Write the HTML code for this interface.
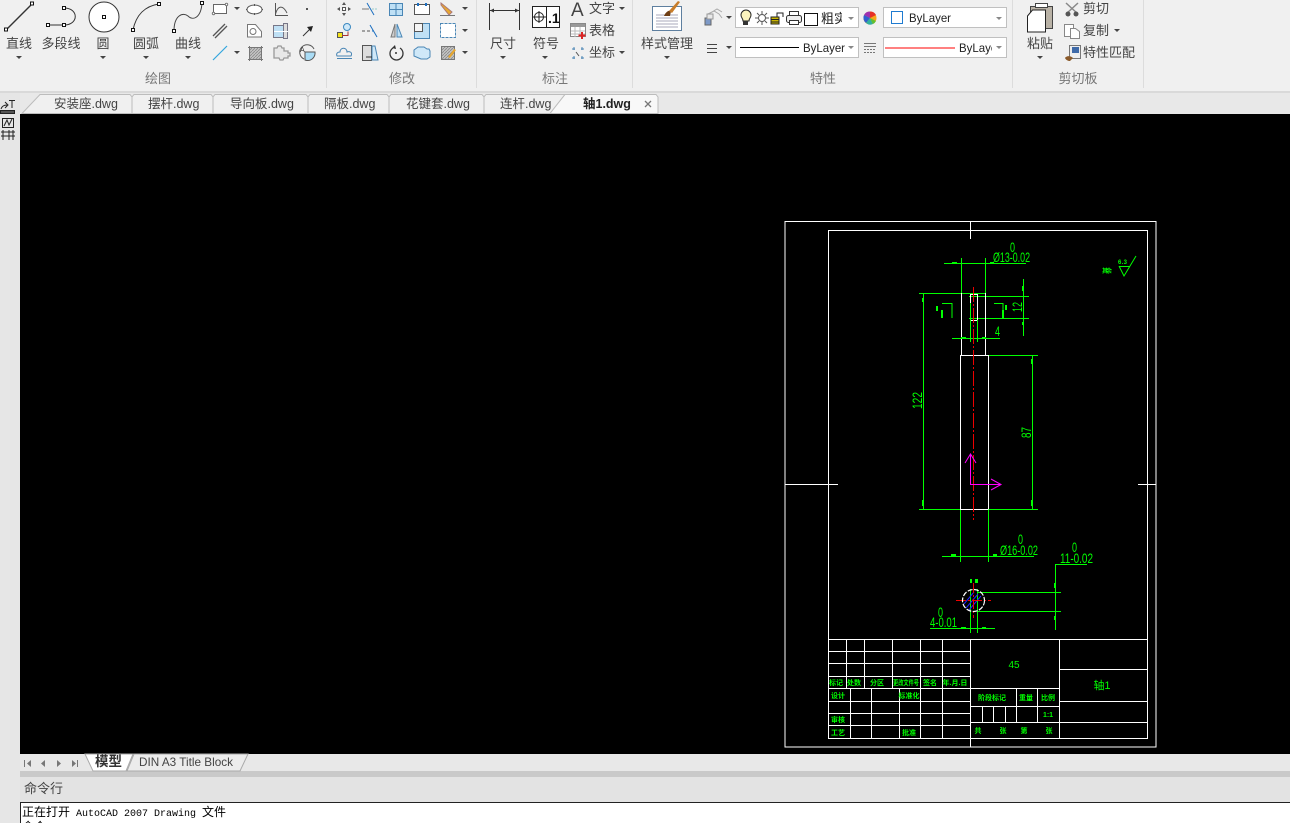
<!DOCTYPE html>
<html lang="zh"><head><meta charset="utf-8"><title>CAD</title>
<style>
html,body{margin:0;padding:0;width:1290px;height:823px;overflow:hidden;background:#f0f0f0}
svg{display:block;position:absolute;left:0;top:0}
text{font-family:"Liberation Sans","Noto Sans CJK SC",sans-serif;white-space:pre}
.l{font-size:13px;fill:#444;text-anchor:middle}
.g{font-size:13px;fill:#777;text-anchor:middle}
.s{font-size:13px;fill:#444}
.t{font-size:12.5px;fill:#444}
.c{font-size:12px;fill:#000}
.w{stroke:#fff;fill:none;stroke-width:1}
.n{stroke:#0f0;fill:none;stroke-width:1}
.d{font-family:"Liberation Sans","Noto Sans CJK SC",sans-serif;fill:#0f0;font-size:14px}
.m{font-size:7px;fill:#0f0;text-anchor:middle;font-weight:bold}
.i{fill:none;stroke:#555;stroke-width:1}
</style></head><body>
<svg width="1290" height="823" viewBox="0 0 1290 823" xmlns="http://www.w3.org/2000/svg">
<defs>
<path id="ar" d="M0 0h6l-3 3z" fill="#444"/>
<pattern id="h" width="3" height="3" patternUnits="userSpaceOnUse"><rect width="3" height="3" fill="#c4c4c4"/><path d="M0 3L3 0" stroke="#888" stroke-width=".8"/></pattern>
</defs>
<!-- backgrounds -->
<rect width="1290" height="91" fill="#f0f0f0"/>
<rect y="91" width="1290" height="2" fill="#d9d9d9"/>
<rect y="93" width="1290" height="21" fill="#e8e8e8"/>
<rect y="93" width="20" height="730" fill="#e6e6e6"/>
<rect x="20" y="114" width="1270" height="640" fill="#000"/>
<rect x="20" y="754" width="1270" height="17" fill="#e8e8e8"/>
<rect x="20" y="771" width="1270" height="6" fill="#c9c9c9"/>
<rect x="20" y="777" width="1270" height="25" fill="#e3e3e3"/>
<rect x="20" y="802" width="1270" height="21" fill="#fff"/>
<path d="M20.5 823V802.5H1290" stroke="#222" fill="none"/>
<!-- separators -->
<g stroke="#dcdcdc"><path d="M326.5 0V88M476.5 0V88M632.5 0V88M1012.5 0V88M1143.5 0V88"/></g>

<!-- draw group -->
<g>
<path d="M6 30L32 4" stroke="#333" stroke-width="1.4"/>
<g fill="#fff" stroke="#111"><rect x="4.5" y="28" width="3" height="3"/><rect x="30.5" y="2" width="3" height="3"/></g>
<path d="M48 25H64M64 8C79 8 79 25 64 25" stroke="#333" fill="none"/>
<g fill="#fff" stroke="#111"><rect x="46.5" y="23.5" width="3" height="3"/><rect x="62.5" y="23.5" width="3" height="3"/><rect x="62.5" y="6.5" width="3" height="3"/></g>
<circle cx="104" cy="17" r="15" fill="#fff" stroke="#333"/>
<rect x="102.5" y="15.5" width="3" height="3" fill="#fff" stroke="#111"/>
<path d="M133 30C136 15 145 6 159 4" stroke="#333" fill="none"/>
<g fill="#fff" stroke="#111"><rect x="131.5" y="28.5" width="3" height="3"/><rect x="157.5" y="2.5" width="3" height="3"/></g>
<path d="M174 31C174 15 183 12 188 16C193 21 201 18 202 3" stroke="#444" fill="none"/>
<g fill="#fff" stroke="#111"><rect x="172.5" y="29.5" width="3" height="3"/><rect x="200.5" y="1.5" width="3" height="3"/></g>
<text class="l" x="19" y="48">直线</text><text class="l" x="61" y="48">多段线</text><text class="l" x="103" y="48">圆</text><text class="l" x="146" y="48">圆弧</text><text class="l" x="188" y="48">曲线</text>
<use href="#ar" x="16" y="56"/><use href="#ar" x="100" y="56"/><use href="#ar" x="143" y="56"/><use href="#ar" x="185" y="56"/>
<text class="g" x="158" y="83">绘图</text>
<!-- small draw icons -->
<rect x="213.5" y="4.5" width="13" height="9" fill="#fff" stroke="#666"/>
<circle cx="226.5" cy="4.5" r="1.2" fill="#fff" stroke="#777"/><circle cx="213.5" cy="13.5" r="1.2" fill="#fff" stroke="#777"/>
<use href="#ar" x="234" y="7"/><use href="#ar" x="234" y="51"/>
<ellipse cx="254.500" cy="9.500" rx="7.500" ry="4.500" fill="#fff" stroke="#555"/><path d="M254.500 4v2M254.500 13v2M247 9.500h-1M262 9.500h1" stroke="#555"/>
<path d="M275.500 3V15.500H288M275.500 14C278 5 283 5 287 13" class="i"/>
<rect x="306" y="8" width="2" height="2" fill="#555"/>
<path d="M213 36L225 24M215 38L227 26" stroke="#555" stroke-width="1.300"/>
<path d="M247.500 24.500h8l6 7v5.500h-14z" fill="#fff" stroke="#777"/><circle cx="253" cy="31.500" r="3" fill="none" stroke="#777"/>
<rect x="273.500" y="25.500" width="10" height="12" fill="#bfe0f5" stroke="#778"/><rect x="283.500" y="23.500" width="4" height="15" fill="#ddd" stroke="#778"/><path d="M274 31.500h14" stroke="#fff"/>
<path d="M303 36L311 28" stroke="#333"/><path d="M307 27l6-1-2 6z" fill="#222"/>
<path d="M213 60L227 46" stroke="#33a6dd" stroke-width="1.200"/>
<rect x="249.500" y="47.500" width="12" height="12" fill="url(#h)" stroke="#777"/><path d="M248 47.500h15M248 59.500h15M249.500 46v15M261.500 46v15" stroke="#777" fill="none"/>
<path d="M274 48h3l1-2h3l1 2h2v3h4v2h2v3h-2v2h-4l-1 2h-3l-1-2h-5z" fill="#e8e8e8" stroke="#999" stroke-width="1.300"/>
<path d="M304 59A7.500 7.500 0 1 1 314 49" fill="none" stroke="#555"/><path d="M305 52h10a7.500 7.500 0 0 1-8 8.500a8 8 0 0 1-2-.5z" fill="#aadcf5" stroke="#555"/>
<text x="300" y="52" font-size="7" fill="#333">A</text>
</g>

<!-- modify group -->
<g>
<g fill="#555"><rect x="342.500" y="7.500" width="3" height="3" fill="#fff" stroke="#555"/><path d="M344 2l2 3h-4zM344 16l2-3h-4zM337 9l3-2v4zM351 9l-3-2v4z"/></g>
<path d="M362 9h7" stroke="#777"/><path d="M372 9h6" stroke="#9cc" stroke-dasharray="2 1"/><path d="M367 3L374 15" stroke="#1d6fc0"/>
<rect x="389.500" y="3.500" width="13" height="12" fill="#bfe0f5" stroke="#4a86b5"/><path d="M396 3v13M390 9.500h13" stroke="#4a86b5"/>
<rect x="414.500" y="4.500" width="15" height="10" fill="#fff" stroke="#555"/><path d="M418 3v3M426 3v3" stroke="#1d6fc0" stroke-width="2"/>
<path d="M441 3l11 9-3 3-8-10z" fill="#e8a830" stroke="#a77"/><path d="M440 15.500h15" stroke="#777"/>
<use href="#ar" x="462" y="7"/><use href="#ar" x="462" y="29"/><use href="#ar" x="462" y="51"/>
<rect x="337.500" y="32.500" width="5" height="5" fill="#f4e21a" stroke="#555"/><circle cx="347" cy="27" r="3.500" fill="#cfe8f8" stroke="#3a88c0"/><path d="M342 35.500h6v-4" stroke="#a33" fill="none"/>
<path d="M362 31h3M367 31h3" stroke="#555"/><path d="M372 31h2" stroke="#1d6fc0"/><path d="M370 25L377 37" stroke="#1d6fc0"/>
<path d="M395 24L391 37h4z" fill="#ccc" stroke="#777"/><path d="M397 24l5 13h-5z" fill="#bfe0f5" stroke="#4a86b5"/>
<rect x="414.500" y="23.500" width="15" height="15" fill="#bfe0f5" stroke="#4a86b5"/><rect x="414.500" y="23.500" width="8" height="8" fill="#f5f5f5" stroke="#555"/>
<rect x="440.500" y="23.500" width="15" height="14" fill="#fff" stroke="#4a86b5" stroke-dasharray="3 1"/>
<path d="M337 56h14c2-4-2-5-4-4c0-5-7-5-7 0c-3 0-4 2-3 4zM337 58.500h15" fill="none" stroke="#4a86b5"/>
<rect x="362.500" y="45.500" width="9" height="15" fill="#ddd" stroke="#555"/><path d="M372 46h3l3 14h-6z" fill="#cfe8f8" stroke="#4a86b5"/><path d="M366 57h6" stroke="#333"/>
<path d="M393 48a6.500 6.500 0 1 0 7 0" fill="none" stroke="#333" stroke-width="1.300"/><circle cx="396" cy="53" r="1" fill="#333"/><path d="M395 45l-3 3 4 1z" fill="#333"/>
<path d="M414 50l4-3h6l3 2h2l1 2v6l-3 2h-6l-7-3z" fill="#cfe8f8" stroke="#4a86b5"/>
<rect x="441.500" y="46.500" width="13" height="13" fill="url(#h)" stroke="#777"/><path d="M448 57l6-8 2 1-6 8z" fill="#e8a830"/>
<text class="g" x="402" y="83">修改</text>
</g>

<!-- annotate -->
<g>
<path d="M489.500 3V30M519.500 3V30M490 10.500H519" stroke="#333" fill="none"/>
<path d="M490 10.500l4-2v4zM519 10.500l-4-2v4z" fill="#333"/>
<rect x="532.500" y="6.500" width="27" height="21" fill="#fff" stroke="#222"/><path d="M546.500 7V27" stroke="#222"/>
<circle cx="539" cy="17" r="4.500" fill="none" stroke="#222"/><path d="M533 17H546M539 11V23" stroke="#222"/>
<text x="548" y="23" font-size="14" font-weight="bold" fill="#111">.1</text>
<text class="l" x="503" y="48">尺寸</text><text class="l" x="546" y="48">符号</text>
<use href="#ar" x="500" y="56"/><use href="#ar" x="542" y="56"/>
<text x="571" y="16" font-size="19" fill="#444">A</text>
<text class="s" x="589" y="13">文字</text><use href="#ar" x="619" y="7"/>
<rect x="570.500" y="23.500" width="15" height="13" fill="#fff" stroke="#888"/><rect x="571" y="24" width="14" height="3" fill="#999"/><path d="M575 27v10M580 27v10M571 31h14M571 34h14" stroke="#bbb"/>
<path d="M582 32v7M578.500 35.500h7" stroke="#d22" stroke-width="2"/>
<text class="s" x="589" y="35">表格</text>
<path d="M572 49h3M581 49h3M572 58h3M581 58h3M574 47v3M582 47v3M574 56v3M582 56v3" stroke="#4a86b5"/><path d="M576 52l3 4" stroke="#555"/>
<text class="s" x="589" y="57">坐标</text><use href="#ar" x="619" y="51"/>
<text class="g" x="555" y="83">标注</text>
</g>

<!-- style -->
<g>
<rect x="652.500" y="6.500" width="29" height="24" fill="#fff" stroke="#5e7f9f"/>
<path d="M656 15h22M656 18h22M656 21h22M656 24h22M656 27h22" stroke="#aab"/>
<path d="M664 16c2-5 6-6 7-5l-1 5z" fill="#6e3e14"/><path d="M669 11l9-10 2 1-8 11z" fill="#c87d2a"/>
<text class="l" x="667" y="48">样式管理</text><use href="#ar" x="664" y="56"/>
</g>

<!-- properties -->
<g>
<path d="M708 14l6-3 5 3 3 4M712 12l5-3 5 3" fill="none" stroke="#aaa"/><rect x="705" y="18" width="6" height="7" fill="#7d99c7" stroke="#666"/><rect x="707" y="14" width="6" height="5" fill="#e8e8e8" stroke="#999"/>
<use href="#ar" x="726" y="16"/><use href="#ar" x="726" y="46"/>
<path d="M707 44.500h10M707 48.500h10M707 52.500h10" stroke="#444"/>
<g fill="#fff" stroke="#c0c0c0"><rect x="735.500" y="7.500" width="123" height="20"/><rect x="883.500" y="7.500" width="123" height="20"/><rect x="735.500" y="37.500" width="123" height="20"/><rect x="883.500" y="37.500" width="123" height="20"/></g>
<path d="M741 15a5 5 0 1 1 10 0c0 3-2 3-2 6h-6c0-3-2-3-2-6z" fill="#fbf3bd" stroke="#222"/><rect x="743" y="21" width="5" height="4" fill="#333"/>
<circle cx="762" cy="18" r="3.500" fill="#fff" stroke="#555"/><path d="M762 11v3M762 22v3M755 18h3M766 18h3M757 13l2 2M765 21l2 2M767 13l-2 2M759 21l-2 2" stroke="#555"/>
<rect x="771" y="17" width="8" height="7" fill="#cbb600" stroke="#222"/><path d="M771 19.500h8M771 22h8" stroke="#222"/><path d="M777 17v-4h6v4" fill="none" stroke="#222"/>
<rect x="786.500" y="15.500" width="15" height="7" rx="2" fill="#eee" stroke="#333"/><rect x="789.500" y="11.500" width="9" height="4" fill="#fff" stroke="#333"/><rect x="789.500" y="20.500" width="9" height="4" fill="#fff" stroke="#333"/>
<rect x="804.500" y="13.500" width="13" height="12" fill="#fff" stroke="#111"/>
<svg x="820" y="8" width="22" height="20" viewBox="0 0 22 20"><text x="1" y="15" font-size="13" fill="#222">粗实线</text></svg>
<path d="M848 17h6l-3 3z" fill="#888"/><path d="M996 17h6l-3 3z" fill="#888"/><path d="M848 46h6l-3 3z" fill="#888"/><path d="M996 46h6l-3 3z" fill="#888"/>
<circle cx="870" cy="18" r="6.500" fill="#f7a61a"/>
<path d="M870 18V11.500A6.500 6.500 0 0 1 876 15z" fill="#e63027"/><path d="M870 18V11.500A6.500 6.500 0 0 0 864 15z" fill="#a030b0"/><path d="M870 18L864 15A6.500 6.500 0 0 0 866 23z" fill="#3060d0"/><path d="M870 18L866 23A6.500 6.500 0 0 0 873 24z" fill="#30b0a0"/><path d="M870 18L873 24A6.500 6.500 0 0 0 876 21z" fill="#60c030"/>
<rect x="891.500" y="11.500" width="11" height="12" fill="#fff" stroke="#1f7bd0"/>
<text x="909" y="22" font-size="12" fill="#222" textLength="42" lengthAdjust="spacingAndGlyphs">ByLayer</text>
<path d="M740 47.500H799" stroke="#000"/>
<text x="803" y="52" font-size="12" fill="#222" textLength="42" lengthAdjust="spacingAndGlyphs">ByLayer</text>
<path d="M864 43.500h12M864 46.500h12" stroke="#777"/><path d="M864 49.500h12M864 52.500h12" stroke="#777" stroke-dasharray="2 1"/>
<path d="M885 48H955" stroke="#f00"/>
<svg x="955" y="38" width="37" height="20" viewBox="0 0 37 20"><text x="4" y="14" font-size="12" fill="#222" textLength="42" lengthAdjust="spacingAndGlyphs">ByLayer</text></svg>
<text class="g" x="823" y="83">特性</text>
</g>

<!-- clipboard -->
<g>
<path d="M1030.500 6.500h22v22h-22z" fill="#b9b2a6" stroke="#444"/><rect x="1035.500" y="3.500" width="12" height="4" fill="#fff" stroke="#444"/>
<path d="M1027.500 16l5-6h13v22h-18z" fill="#fff" stroke="#222"/>
<text class="l" x="1040" y="48">粘贴</text><use href="#ar" x="1037" y="56"/>
<path d="M1066 3l12 11M1078 3l-12 11" stroke="#888" stroke-width="1.500"/><circle cx="1068" cy="14" r="2.500" fill="#555"/><circle cx="1076" cy="14" r="2.500" fill="#555"/>
<text class="s" x="1083" y="13">剪切</text>
<rect x="1064.500" y="24.500" width="9" height="12" fill="#fff" stroke="#888"/><path d="M1070.500 28.500h5l4 3v7h-9z" fill="#fff" stroke="#888"/>
<text class="s" x="1083" y="35">复制</text><use href="#ar" x="1114" y="29"/>
<rect x="1069.500" y="45.500" width="11" height="13" fill="#eee" stroke="#777"/><rect x="1072" y="47" width="7" height="6" fill="#3f6aa8"/><path d="M1065 58c2-3 6-2 8 0l-3 3c-2 0-4-1-5-3z" fill="#8a5a2a"/>
<text class="s" x="1083" y="57">特性匹配</text>
<text class="g" x="1078" y="83">剪切板</text>
</g>

<!-- left strip -->
<g fill="none" stroke="#222">
<path d="M1 109c1-3 3-4 6-4M5 102l3 3-3 3"/><path d="M9 100.500h6M12 101v7"/>
<rect x="0.500" y="110.500" width="14" height="3" fill="#555"/>
<rect x="2.500" y="118.500" width="11" height="9"/><path d="M4 126l3-6 2 5 3-6"/>
<path d="M1 132h14M3 130v10M9 130v10M13 130v10M1 136h14"/>
</g>

<!-- doc tabs -->
<g stroke="#bcbcbc">
<path d="M22 113.500L40 94.500H130L132 97V113.500z" fill="#f0f0f0"/>
<path d="M132 113.500V97L134 94.500H211L213 97V113.500z" fill="#f0f0f0"/>
<path d="M213 113.500V97L215 94.500H306L308 97V113.500z" fill="#f0f0f0"/>
<path d="M308 113.500V97L310 94.500H387L389 97V113.500z" fill="#f0f0f0"/>
<path d="M389 113.500V97L391 94.500H482L484 97V113.500z" fill="#f0f0f0"/>
<path d="M484 113.500V97L486 94.500H565L550 113.500z" fill="#f0f0f0"/>
<path d="M550 113.500L565 94.500H656L658 97V113.500z" fill="#f8f8f8"/>
</g>
<text class="t" x="54" y="108">安装座.dwg</text><text class="t" x="148" y="108">摆杆.dwg</text><text class="t" x="230" y="108">导向板.dwg</text><text class="t" x="324" y="108">隔板.dwg</text><text class="t" x="406" y="108">花键套.dwg</text><text class="t" x="500" y="108">连杆.dwg</text>
<text x="583" y="108" font-size="12.500" font-weight="bold" fill="#222">轴1.dwg</text>
<path d="M645 101l6 6M651 101l-6 6" stroke="#777" stroke-width="1.300"/>

<!-- drawing frame -->
<rect x="785" y="221.500" width="371" height="525.500" class="w"/>
<rect x="828.500" y="230.500" width="319" height="508" class="w"/>
<path d="M970.500 222V239M785 484.500H838M1138 484.500H1156M970.500 738V747" class="w"/>

<!-- dims -->
<g class="n">
<path d="M944 263.500H1026M961.500 258V293M985.500 258V293M919 293.500H985M923.500 293V509"/>
<path d="M970.500 303V342M977.500 304V342M969 296.500H1029M969 318.500H1029M1023.500 279V336M952 338.500H1000"/>
<path d="M988 355.500H1038M1032.500 355V509M919 509.500H1038M960.500 509V562M988.500 509V562M942 556.500H1034"/>
<path d="M970.500 589V633M977.500 589V633M977 592.500H1061M977 611.500H1061M1055.500 564V630M1055 564.500H1087M930 628.500H995"/>
<path d="M942 303.500H952V318M994 303.500H1003V318"/>
</g>
<!-- part -->
<path d="M961.500 293V355M985.500 293V355M960.500 355.500H988.500M960.500 355V509M988.500 355V509M960 509.500H988.500" class="w"/>
<path d="M970.500 294V303M977.500 294V320M970 294.500H977M971 320.500H977" class="w" stroke-width="1.500"/>
<!-- centre line -->
<path d="M973.500 287V520" stroke="#e00" stroke-dasharray="15 2 2 2"/>
<g fill="#0f0"><rect x="952" y="262" width="5" height="2"/><rect x="990" y="262" width="4" height="2"/><rect x="922" y="298" width="2" height="4"/><rect x="922" y="500" width="2" height="6"/><rect x="1031" y="359" width="2" height="5"/><rect x="1031" y="500" width="2" height="6"/><rect x="951" y="554" width="5" height="2"/><rect x="993" y="554" width="4" height="2"/><rect x="961" y="337" width="5" height="2"/><rect x="982" y="337" width="4" height="2"/><rect x="1022" y="286" width="2" height="5"/><rect x="1022" y="322" width="2" height="3"/><rect x="941" y="310" width="2" height="8"/><rect x="1002" y="310" width="2" height="8"/><rect x="1054" y="583" width="2" height="5"/><rect x="1054" y="616" width="2" height="4"/><rect x="961" y="627" width="5" height="2"/><rect x="982" y="627" width="4" height="2"/></g>

<!-- dim text -->
<text class="d" x="1010" y="252" textLength="5" lengthAdjust="spacingAndGlyphs">0</text>
<text class="d" x="993" y="262" textLength="37" lengthAdjust="spacingAndGlyphs">Ø13-0.02</text>
<text class="d" x="995" y="336" textLength="5" lengthAdjust="spacingAndGlyphs">4</text>
<text class="d" transform="translate(1022,312) rotate(-90)" textLength="10" lengthAdjust="spacingAndGlyphs">12</text>
<text class="d" transform="translate(922,409) rotate(-90)" textLength="17" lengthAdjust="spacingAndGlyphs">122</text>
<text class="d" transform="translate(1031,438) rotate(-90)" textLength="11" lengthAdjust="spacingAndGlyphs">87</text>
<text class="d" x="1018" y="544" textLength="5" lengthAdjust="spacingAndGlyphs">0</text>
<text class="d" x="1000" y="555" textLength="38" lengthAdjust="spacingAndGlyphs">Ø16-0.02</text>
<text class="d" x="1072" y="552" textLength="5" lengthAdjust="spacingAndGlyphs">0</text>
<text class="d" x="1060" y="563" textLength="33" lengthAdjust="spacingAndGlyphs">11-0.02</text>
<text class="d" x="938" y="617" textLength="5" lengthAdjust="spacingAndGlyphs">0</text>
<text class="d" x="930" y="627" textLength="27" lengthAdjust="spacingAndGlyphs">4-0.01</text>
<g fill="#0f0"><rect x="936" y="306" width="2" height="5"/><rect x="1005" y="305" width="2" height="5"/><rect x="970" y="579" width="2" height="4"/><rect x="975" y="579" width="3" height="4"/></g>
<!-- roughness -->
<path d="M1119 266.500H1130M1119 266L1124 276L1136 256" class="n"/>
<text x="1118" y="264" font-size="6" fill="#0f0" font-weight="bold" textLength="9" lengthAdjust="spacing">6.3</text>
<text x="1102" y="273" font-size="6" fill="#0f0" font-weight="bold" textLength="10" lengthAdjust="spacing">其余</text>

<!-- UCS -->
<g stroke="#f0f" fill="none"><path d="M970.500 455V484.500H1000"/><path d="M965 463L970.500 454L976 463M991 479L1001 484.500L991 490"/></g>

<!-- section circle -->
<path d="M966 608L978 594M969 610L981 596M964 604L974 592" stroke="#22f"/>
<path d="M956 600.500H991M973.500 583V618" stroke="#e00" stroke-dasharray="10 2 2 2"/>
<circle cx="973.500" cy="600.500" r="11" fill="none" stroke="#fff" stroke-width="1.200" stroke-dasharray="5 1.500"/>

<!-- title block -->
<g class="w">
<path d="M828 639.500H1147M828 651.500H970M828 663.500H970M828 676.500H970M828 688.500H1059M828 701.500H970M828 713.500H970M828 725.500H970"/>
<path d="M846.500 639V688M864.500 639V688M892.500 639V688M920.500 639V688M942.500 639V688"/>
<path d="M850.500 688V738M871.500 688V738M899.500 688V738M920.500 688V738M942.500 688V738"/>
<path d="M970.500 639V747M1059.500 639V738M1059 669.500H1147M1059 701.500H1147M1059 722.500H1147M970 706.500H1059M970 722.500H1059"/>
<path d="M1016.500 688V722M1037.500 688V722M982.500 706V722M993.500 706V722M1005.500 706V722"/>
</g>
<g>
<text class="m" x="836" y="685">标记</text><text class="m" x="854" y="685">处数</text><text class="m" x="877" y="685">分区</text><text class="m" x="906" y="685" textLength="26" lengthAdjust="spacingAndGlyphs">更改文件号</text><text class="m" x="930" y="685">签名</text>
<text class="m" x="955" y="685">年.月.日</text>
<text class="m" x="838" y="698">设计</text><text class="m" x="909" y="698">标准化</text>
<text class="m" x="838" y="722">审核</text><text class="m" x="838" y="735">工艺</text><text class="m" x="909" y="735">批准</text>
<text class="m" x="992" y="700">阶段标记</text><text class="m" x="1026" y="700">重量</text><text class="m" x="1048" y="700">比例</text>
<text class="m" x="1048" y="717">1:1</text>
<text class="m" x="978" y="733">共</text><text class="m" x="1003" y="733">张</text><text class="m" x="1024" y="733">第</text><text class="m" x="1049" y="733">张</text>
<text x="1014" y="668" font-size="10" fill="#0f0" text-anchor="middle">45</text>
<text x="1102" y="689" font-size="11" fill="#0f0" text-anchor="middle">轴1</text>
</g>

<!-- layout tabs -->
<g fill="#777"><path d="M24 760v7h1v-7zM31 760l-4 3.500 4 3.500zM45 760l-4 3.500 4 3.500zM57 760l4 3.500-4 3.500zM72 760l4 3.500-4 3.500zM77 760v7h1v-7z"/></g>
<path d="M85 754L93 771H126L133 754z" fill="#fff" stroke="#aaa"/>
<path d="M127 771L134 754H248L240 771z" fill="#ececec" stroke="#aaa"/>
<text x="95" y="766" font-size="13.500" font-weight="bold" fill="#333">模型</text>
<text x="139" y="766" font-size="12" fill="#444" textLength="94" lengthAdjust="spacingAndGlyphs">DIN A3 Title Block</text>

<!-- command -->
<text x="24" y="793" font-size="13" fill="#444">命令行</text>
<text x="22" y="816" class="c" style="font-size:12px;font-family:'Noto Sans CJK SC',sans-serif">正在打开</text>
<text x="76" y="816" style="font-family:'Liberation Mono',monospace;font-size:10px" fill="#000">AutoCAD 2007 Drawing</text>
<text x="202" y="816" class="c" style="font-size:12px;font-family:'Noto Sans CJK SC',sans-serif">文件</text>
<text x="22" y="831" class="c" style="font-size:12px;font-family:'Noto Sans CJK SC',sans-serif">命令:</text>
</svg>
</body></html>
